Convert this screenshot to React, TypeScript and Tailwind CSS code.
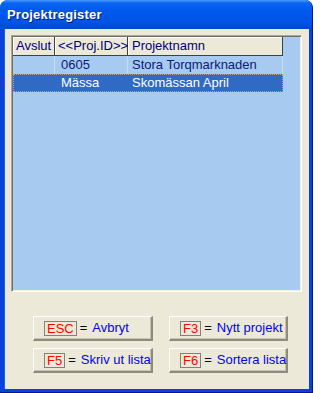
import React from "react";

function KeyButton({ k, label }: { k: string; label: string }) {
  return (
    <div className="h-[25px] flex items-center pl-[10px] whitespace-nowrap bg-[#ece9d8] border-t border-l border-white border-b-2 border-r-2 border-b-[#8e8b7e] border-r-[#8e8b7e] shadow-[inset_-1px_-1px_0_#c7c4b6]">
      <span className="h-[15px] px-[2px] flex items-center border border-[#808080] text-[#ff0000] leading-none">
        {k}
      </span>
      <span className="ml-[3px] text-black">=</span>
      <span className="ml-[5px] text-[#0000ff]">{label}</span>
    </div>
  );
}

export default function App() {
  return (
    <div
      className="w-[313px] h-[393px] flex flex-col rounded-t-[8px] overflow-hidden bg-[#0842d8] border-r border-b border-[#00188f]"
      style={{ fontFamily: '"Liberation Sans", Arial, sans-serif' }}
    >
      <div className="h-[29px] shrink-0 flex items-center pl-[7px] bg-[linear-gradient(180deg,#4b9cff_0%,#0a66f2_10%,#0058ee_35%,#0054e6_75%,#0046d2_100%)]">
        <span className="text-white font-bold text-[13px] [text-shadow:1px_1px_#0a1e6e] tracking-[0.2px]">
          Projektregister
        </span>
      </div>
      <div className="flex-1 ml-[4px] mr-[3px] mb-[3px] bg-[#ece9d8] flex flex-col text-[13px] border-l border-[#1660e8]">
        <div className="mt-[6px] ml-[6px] w-[291px] h-[257px] bg-[#a6caf0] border border-t-[#aca899] border-l-[#aca899] border-b-white border-r-white shadow-[inset_1px_1px_0_#716f64,inset_-1px_-1px_0_#f1efe2] p-[1px] pt-[1px] pl-[1px]">
          <div className="flex h-[19px] text-[#000080]">
            <div className="w-[42px] bg-[#ece9d8] border-r border-b border-[#404040] shadow-[inset_1px_1px_0_white] pl-[3px] flex items-center">
              Avslut
            </div>
            <div className="w-[73px] bg-[#ece9d8] border-r border-b border-[#404040] shadow-[inset_1px_1px_0_white] pl-[3px] flex items-center">
              &lt;&lt;Proj.ID&gt;&gt;
            </div>
            <div className="w-[155px] bg-[#ece9d8] border-r border-b border-[#404040] shadow-[inset_1px_1px_0_white] pl-[4px] flex items-center">
              Projektnamn
            </div>
          </div>
          <div className="flex h-[18px] text-[#0c1a7a]">
            <div className="w-[42px] border-r border-[#c6dcf4]"></div>
            <div className="w-[73px] border-r border-[#c6dcf4] pl-[6px] flex items-center">0605</div>
            <div className="w-[155px] border-r border-[#c6dcf4] pl-[4px] flex items-center">
              Stora Torqmarknaden
            </div>
          </div>
          <div className="flex h-[18px] w-[270px] text-white bg-[#316ac5] border border-dotted border-[#e89a28]">
            <div className="w-[41px]"></div>
            <div className="w-[73px] pl-[6px] flex items-center">Mässa</div>
            <div className="w-[154px] pl-[4px] flex items-center">Skomässan April</div>
          </div>
        </div>
        <div className="mt-[24px] ml-[28px] grid grid-cols-[120px_119px] gap-x-[16px] gap-y-[7px]">
          <KeyButton k="ESC" label="Avbryt" />
          <KeyButton k="F3" label="Nytt projekt" />
          <KeyButton k="F5" label="Skriv ut lista" />
          <KeyButton k="F6" label="Sortera lista" />
        </div>
      </div>
    </div>
  );
}
